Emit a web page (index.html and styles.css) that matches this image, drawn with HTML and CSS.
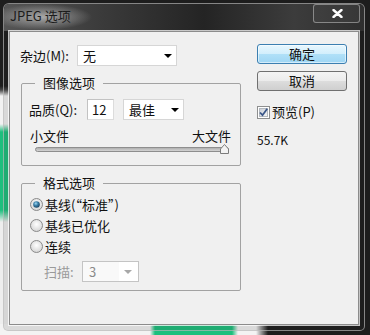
FILE: index.html
```html
<!DOCTYPE html>
<html lang="zh-CN">
<head>
    <meta charset="UTF-8">
    <title>JPEG 选项</title>
    <link rel="stylesheet" href="styles.css">
</head>
<body>

<svg class="defs" width="0" height="0" aria-hidden="true">
    <defs>
        <radialGradient id="radioFill" cx="50%" cy="40%" r="60%">
            <stop offset="0" stop-color="#ffffff"/>
            <stop offset="1" stop-color="#d4d4d4"/>
        </radialGradient>
        <radialGradient id="radioDot" cx="40%" cy="35%" r="70%">
            <stop offset="0" stop-color="#9fd8f2"/>
            <stop offset="0.45" stop-color="#3a7fa8"/>
            <stop offset="1" stop-color="#173e5c"/>
        </radialGradient>
        <linearGradient id="checkFill" x1="0" y1="0" x2="1" y2="1">
            <stop offset="0" stop-color="#c9ced6"/>
            <stop offset="1" stop-color="#f7f7f7"/>
        </linearGradient>
        <linearGradient id="trackFill" x1="0" y1="0" x2="0" y2="1">
            <stop offset="0" stop-color="#a9a9a9"/>
            <stop offset="1" stop-color="#dadada"/>
        </linearGradient>
    </defs>
</svg>

<div class="window">
    <div class="titlebar">
        <span class="title">JPEG 选项</span>
        <span class="close">
            <svg width="11" height="9" viewBox="0 0 11 9"><path d="M1.5 1 L9.5 8 M9.5 1 L1.5 8" stroke="#fff" stroke-width="2.4" stroke-linecap="round"/></svg>
        </span>
    </div>

    <div class="client">
        <div class="left-col">
            <div class="row">
                <label class="lbl lbl-matte">杂边(M):</label>
                <div class="combo combo-matte"><span>无</span><i class="arrow"></i></div>
            </div>

            <fieldset class="group group-image">
                <legend>图像选项</legend>
                <div class="row quality-row">
                    <label class="lbl lbl-quality">品质(Q):</label>
                    <div class="textbox">12</div>
                    <div class="combo combo-quality"><span>最佳</span><i class="arrow"></i></div>
                </div>
                <div class="size-labels"><span>小文件</span><span>大文件</span></div>
                <div class="slider">
                    <svg width="195" height="11" viewBox="0 0 195 11">
                        <rect x="0.5" y="4.5" width="193" height="4" rx="2" fill="url(#trackFill)" stroke="#8e8e8e"/>
                        <path d="M185.5 10.5 V6 L189.5 1.5 L193.5 6 V10.5 Z" fill="#f3f3f3" stroke="#7c7c7c"/>
                    </svg>
                </div>
            </fieldset>

            <fieldset class="group group-format">
                <legend>格式选项</legend>
                <div class="radio-row">
                    <svg class="radio" width="13" height="13" viewBox="0 0 13 13">
                        <circle cx="6.5" cy="6.5" r="6" fill="url(#radioFill)" stroke="#8a8a8a"/>
                        <circle cx="6.5" cy="6.5" r="3.3" fill="url(#radioDot)"/>
                    </svg>
                    <span>基线(“标准”)</span>
                </div>
                <div class="radio-row">
                    <svg class="radio" width="13" height="13" viewBox="0 0 13 13">
                        <circle cx="6.5" cy="6.5" r="6" fill="url(#radioFill)" stroke="#8a8a8a"/>
                    </svg>
                    <span>基线已优化</span>
                </div>
                <div class="radio-row">
                    <svg class="radio" width="13" height="13" viewBox="0 0 13 13">
                        <circle cx="6.5" cy="6.5" r="6" fill="url(#radioFill)" stroke="#8a8a8a"/>
                    </svg>
                    <span>连续</span>
                </div>
                <div class="row scan-row">
                    <label class="lbl lbl-scan">扫描:</label>
                    <div class="combo combo-scan"><span>3</span><i class="arrow"></i></div>
                </div>
            </fieldset>
        </div>

        <div class="right-col">
            <button class="btn btn-default">确定</button>
            <button class="btn">取消</button>
            <div class="check-row">
                <svg width="13" height="13" viewBox="0 0 13 13">
                    <rect x="0.5" y="0.5" width="12" height="12" fill="#fff" stroke="#8e8f8f"/>
                    <rect x="2.5" y="2.5" width="8" height="8" fill="url(#checkFill)" stroke="#b3b8be"/>
                    <path d="M3 6.5 L5.5 9.2 L10.2 2.8" fill="none" stroke="#3a5688" stroke-width="1.8"/>
                </svg>
                <span>预览(P)</span>
            </div>
            <div class="size-info">55.7K</div>
        </div>
    </div>
</div>

</body>
</html>
```

FILE: styles.css
```css
* {
    box-sizing: border-box;
}
html, body {
    margin: 0;
}
body {
    width: 370px;
    height: 335px;
    padding: 3px 0 0 3px;
    overflow: hidden;
    font-family: "Noto Sans CJK SC", sans-serif;
    font-size: 13px;
    color: #111;
    background:
        linear-gradient(to right, #f3f3f3 0 150px, #1dbf7d 155px 232px, #f3f3f3 238px 256px, #1d1d1d 268px) left bottom / 100% 11px no-repeat,
        linear-gradient(to bottom, #1d1d1d 0 86px, #4a4a4a 90px, #f2f2f2 96px 124px, #1dbf7d 132px 210px, #eeeeee 222px) left top / 10px 100% no-repeat,
        #1d1d1d;
}
.defs {
    position: absolute;
}

/* window frame */
.window {
    width: 362px;
    height: 328px;
    border: 1px solid rgba(190, 190, 190, 0.65);
    border-radius: 6px 6px 5px 5px;
    background: rgba(40, 40, 40, 0.12);
    display: flex;
    flex-direction: column;
}
.titlebar {
    height: 27px;
    display: flex;
    justify-content: space-between;
    align-items: flex-start;
    border-radius: 5px 5px 0 0;
    background:
        radial-gradient(ellipse 50px 13px at 38px 13px, rgba(185, 185, 185, 0.85), rgba(185, 185, 185, 0)),
        linear-gradient(to right, #555 0, #3a3a3a 100px, #242424 200px, #3c3c3c 290px, #2e2e2e 362px);
}
.title {
    padding: 4px 0 0 6px;
    line-height: 16px;
    color: #1c1c1c;
}
.close {
    width: 47px;
    height: 19px;
    margin-right: 4px;
    border: 1px solid rgba(255, 255, 255, 0.38);
    border-radius: 3px;
    background: rgba(255, 255, 255, 0.04);
    display: flex;
    align-items: center;
    justify-content: center;
}
.close svg {
    margin-left: 2px;
}

/* client area */
.client {
    flex: 1;
    margin: 0 5px 5px;
    border: 1px solid #8c8c8c;
    box-shadow: 0 0 0 1px rgba(255, 255, 255, 0.75);
    background: #f0f0f0;
    display: flex;
    padding-top: 12px;
}
.left-col {
    width: 231px;
    padding: 1px 0 0 10px;
}
.right-col {
    margin-left: 16px;
    width: 90px;
}

.row {
    display: flex;
    align-items: center;
    height: 21px;
}
.lbl {
    line-height: 16px;
}
.lbl-matte {
    width: 57px;
}
.lbl-quality {
    width: 58px;
}
.lbl-scan {
    width: 38px;
    margin-left: 15px;
    color: #9a9a9a;
}

.combo {
    height: 21px;
    background: #fff;
    border: 1px solid #d6d6d6;
    display: flex;
    align-items: center;
    justify-content: space-between;
    padding: 0 4px 0 5px;
    line-height: 16px;
}
.arrow {
    width: 0;
    height: 0;
    border-left: 4px solid transparent;
    border-right: 4px solid transparent;
    border-top: 4px solid #000;
}
.combo-matte {
    width: 100px;
}
.combo-quality {
    width: 61px;
    margin-left: 9px;
}
.combo-scan {
    width: 57px;
    padding: 0;
    border-color: #c4c4c4;
    color: #8a8a8a;
}
.combo-scan span {
    flex: 1;
    height: 100%;
    padding-left: 6px;
    background: #f9f9f9;
    display: flex;
    align-items: center;
}
.combo-scan .arrow {
    border-top-color: #a8a8a8;
    margin: 0 6px 0 5px;
}
.textbox {
    width: 27px;
    height: 21px;
    background: #fff;
    border: 1px solid #c2c2c2;
    border-right-color: #dcdcdc;
    border-bottom-color: #dcdcdc;
    padding-left: 4px;
    line-height: 19px;
}

/* group boxes */
.group {
    margin: 9px 0 0 1px;
    width: 220px;
    border: 1px solid #a2a2a2;
    border-radius: 2px;
    padding: 0 9px 0 7px;
}
.group legend {
    margin-left: 6px;
    padding: 0 8px;
    line-height: 16px;
}
.group-image {
    padding-bottom: 11px;
}
.quality-row {
    margin-top: 8px;
}
.size-labels {
    display: flex;
    justify-content: space-between;
    margin-top: 8px;
    padding-left: 1px;
    line-height: 15px;
}
.slider {
    margin-left: 6px;
    height: 11px;
}
.slider svg {
    display: block;
}

.group-format {
    padding-bottom: 8px;
}
.radio-row {
    display: flex;
    align-items: center;
    height: 21px;
    line-height: 16px;
}
.radio-row:first-of-type {
    margin-top: 3px;
}
.radio {
    margin: 0 2px 0 1px;
}
.scan-row {
    margin-top: 4px;
}

/* buttons and preview */
.btn {
    display: block;
    width: 90px;
    height: 20px;
    padding: 0;
    font: inherit;
    line-height: 18px;
    color: #111;
    border: 1px solid #707070;
    border-radius: 3px;
    background: linear-gradient(to bottom, #f4f4f4 0, #ebebeb 50%, #dddddd 51%, #cfcfcf 100%);
}
.btn + .btn {
    margin-top: 7px;
}
.btn-default {
    border-color: #3c7fb1;
    background: linear-gradient(to bottom, #e8f7fe 0, #d2eefc 50%, #b0e0f8 51%, #9fd6f4 100%);
    box-shadow: inset 0 0 0 1px rgba(255, 255, 255, 0.55);
}
.check-row {
    margin-top: 13px;
    display: flex;
    align-items: center;
    gap: 2px;
    line-height: 16px;
}
.size-info {
    margin-top: 12px;
    line-height: 16px;
    font-size: 12px;
}
```
